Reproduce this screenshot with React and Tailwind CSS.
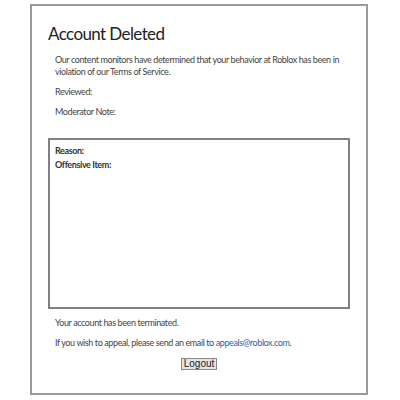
export default function App() {
  return (
    <div className="w-[400px] h-[400px] bg-white" style={{ fontFamily: "Lato, 'Open Sans', sans-serif" }}>
      <div className="ml-[30px] pt-[4px]">
        <div className="w-[338px] h-[391px] border-2 border-[#9a9a9a] bg-white flex flex-col pl-[16px] pr-[16px]">
          <h1 className="mt-[18px] text-[17px] leading-[20px] tracking-[-0.6px] text-[#222] font-normal">Account Deleted</h1>
          <div className="pl-[7px] text-[9px] leading-[12px] tracking-[-0.4px] text-[#444] mt-[10px]">
            <p className="w-[292px]">Our content monitors have determined that your behavior at Roblox has been in violation of our Terms of Service.</p>
            <p className="mt-[8px]">Reviewed:</p>
            <p className="mt-[8px]">Moderator Note:</p>
          </div>
          <div className="mt-[20px] h-[171px] border-2 border-[#808080] pl-[5px] pt-[5px] text-[9px] leading-[12px] tracking-[-0.4px] font-bold text-[#333]">
            <p>Reason:</p>
            <p className="mt-[2px]">Offensive Item:</p>
          </div>
          <div className="pl-[7px] text-[9px] leading-[12px] tracking-[-0.4px] text-[#444]">
            <p className="mt-[8px]">Your account has been terminated.</p>
            <p className="mt-[8px]">
              If you wish to appeal, please send an email to{" "}
              <a className="text-[#2f5ea5]">appeals@roblox.com</a>.
            </p>
          </div>
          <div className="flex justify-center mt-[9px]">
            <button
              className="h-[12px] px-[2px] text-[10px] leading-[10px] text-[#222] bg-[#e4e4e4] border border-[#8a8a8a]"
              style={{ fontFamily: "'Liberation Sans', Arial, sans-serif" }}
            >
              Logout
            </button>
          </div>
        </div>
      </div>
    </div>
  );
}
